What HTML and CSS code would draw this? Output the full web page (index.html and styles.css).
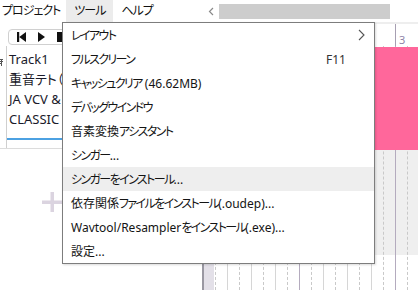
FILE: index.html
```html
<!DOCTYPE html>
<html lang="ja">
<head>
    <meta charset="UTF-8">
    <title>OpenUtau</title>
    <link rel="stylesheet" href="styles.css">
</head>
<body>
<div class="app">
    <!-- メニューバー -->
    <div class="menubar">
        <div class="menus">
            <span class="menu-item">プロジェクト</span>
            <span class="menu-item open">ツール</span>
            <span class="menu-item">ヘルプ</span>
        </div>
        <div class="hscroll">
            <svg class="scroll-arrow" width="6" height="9" viewBox="0 0 6 9"><polyline points="5,1 1.5,4.5 5,8" fill="none" stroke="#8a8a8a" stroke-width="1.2"/></svg>
            <div class="scroll-thumb"></div>
        </div>
    </div>

    <div class="workspace">
        <!-- トラックヘッダー -->
        <div class="side">
            <div class="toolbar">
                <div class="transport">
                    <svg width="9" height="10" viewBox="0 0 9 10"><rect x="0" y="0" width="2.2" height="10" fill="#111"/><polygon points="9,0 2.2,5 9,10" fill="#111"/></svg>
                    <svg width="7" height="10" viewBox="0 0 7 10"><polygon points="0,0 7,5 0,10" fill="#111"/></svg>
                    <svg width="9" height="10" viewBox="0 0 9 10"><rect x="0" y="0" width="9" height="10" fill="#111"/></svg>
                </div>
            </div>
            <div class="track-header">
                <div class="track-grip">
                    <svg width="3" height="7" viewBox="0 0 3 7"><path d="M0 0.5H3M0 2.5H3M0 4.5H2M1.5 0V7" stroke="#555" stroke-width="1" fill="none"/></svg>
                </div>
                <div class="track-info">
                    <div class="track-line">Track1</div>
                    <div class="track-line">重音テト（</div>
                    <div class="track-line">JA VCV &amp;</div>
                    <div class="track-line">CLASSIC</div>
                    <div class="track-meter"></div>
                </div>
            </div>
            <div class="add-track">
                <svg width="20" height="20" viewBox="0 0 20 20"><rect x="8.5" y="0" width="3.5" height="20" fill="#dbd4e0"/><rect x="0" y="8.5" width="20" height="3.5" fill="#dbd4e0"/></svg>
            </div>
        </div>

        <!-- トラックエリア -->
        <div class="arrange">
            <div class="ruler">
                <div class="bar-label">1</div>
                <div class="bar-label">2</div>
                <div class="bar-label">3</div>
            </div>
            <div class="arrange-body">
                <div class="rows">
                    <div class="row row-1"></div>
                    <div class="row row-2"></div>
                    <div class="row"></div>
                </div>
                <div class="beats">
                    <div class="beat first"></div>
                    <div class="beat"></div>
                    <div class="beat"></div>
                    <div class="beat"></div>
                    <div class="beat bar"></div>
                    <div class="beat"></div>
                    <div class="beat"></div>
                    <div class="beat"></div>
                    <div class="beat bar"></div>
                </div>
                <div class="parts">
                    <div class="part"></div>
                </div>
            </div>
        </div>
    </div>

    <!-- ツールメニュー -->
    <ul class="dropdown">
        <li>レイアウト<svg class="submenu" width="7" height="12" viewBox="0 0 7 12"><polyline points="1,1 6,6 1,11" fill="none" stroke="#555" stroke-width="1.1"/></svg></li>
        <li>フルスクリーン<span class="w shortcut">F11</span></li>
        <li>キャッシュクリア<span class="w">&nbsp;(46.62MB)</span></li>
        <li>デバッグウインドウ</li>
        <li><span class="w">音素変換</span>アシスタント</li>
        <li>シンガー<span class="w">...</span></li>
        <li class="hover">シンガーをインストール<span class="w">...</span></li>
        <li><span class="w">依存関係</span>ファイルをインストール<span class="w">(.oudep)...</span></li>
        <li><span class="w">Wavtool/Resampler</span>をインストール<span class="w">(.exe)...</span></li>
        <li><span class="w">設定...</span></li>
    </ul>
</div>
</body>
</html>
```

FILE: styles.css
```css
body {
    margin: 0;
    font-family: "Noto Sans", "Noto Sans CJK JP", sans-serif;
    font-size: 12px;
    color: #111;
    background-color: #fff;
    font-feature-settings: "palt";
}

.app {
    position: relative;
    width: 418px;
    height: 290px;
    overflow: hidden;
}

/* Menu bar */
.menubar {
    display: flex;
    height: 22px;
}

.menus {
    display: flex;
    width: 202px;
    letter-spacing: -1px;
}

.menu-item {
    height: 22px;
    line-height: 22px;
    padding: 0 8px;
}

.menu-item:first-child {
    padding: 0 6px 0 2px;
}

.menu-item.open {
    background-color: #ececec;
}

.hscroll {
    display: flex;
    align-items: center;
    padding-left: 6px;
}

.scroll-thumb {
    width: 171px;
    height: 15px;
    margin-left: 5px;
    background-color: #cdcdcd;
}

/* Workspace */
.workspace {
    display: flex;
    height: 268px;
}

.side {
    width: 202px;
    flex-shrink: 0;
}

.toolbar {
    height: 24px;
    padding: 7px 0 0 8px;
    box-sizing: border-box;
}

.transport {
    display: flex;
    align-items: center;
    gap: 12px;
    width: 90px;
    height: 16px;
    padding-left: 8px;
    border: 1px solid #d0d0d0;
    border-radius: 4px;
    box-sizing: border-box;
}

.track-header {
    display: flex;
    height: 103px;
    border-bottom: 1px solid #dcdcdc;
    box-sizing: border-box;
}

.track-grip {
    width: 6px;
    padding-top: 7px;
}

.track-info {
    flex: 1;
    border-left: 1px solid #cfcfcf;
    padding-top: 3px;
}

.track-line {
    padding-left: 2px;
    font-size: 13px;
    line-height: 20px;
    white-space: nowrap;
    color: #1a1a2a;
}

.track-meter {
    height: 2px;
    margin-top: 9px;
    background-color: #4ca1e2;
}

.add-track {
    display: flex;
    align-items: center;
    height: 106px;
    padding-left: 42px;
}

/* Arrange area */
.arrange {
    flex: 1;
    display: flex;
    flex-direction: column;
}

.ruler {
    display: flex;
    height: 24px;
    padding-left: 1px;
    border-top: 2px solid #eee;
    box-sizing: border-box;
}

.bar-label {
    flex: 0 0 96px;
    display: flex;
    align-items: flex-end;
    padding: 0 0 1px 3px;
    border-left: 1px solid #a79fb2;
    box-sizing: border-box;
    font-size: 11px;
    line-height: 1;
    color: #8f84a8;
}

.arrange-body {
    flex: 1;
    display: grid;
}

.rows,
.beats,
.parts {
    grid-area: 1 / 1;
}

.rows {
    display: flex;
    flex-direction: column;
}

.row {
    flex: 1;
}

.row-1 {
    flex: 0 0 104px;
}

.row-2 {
    flex: 0 0 105px;
    background-color: #efefef;
}

.beats {
    display: flex;
}

.beat {
    display: flex;
    flex: 0 0 24px;
    border-left: 1px solid #d6d6d6;
    box-sizing: border-box;
}

.beat::after {
    content: "";
    margin-left: 11px;
    border-left: 1px dashed #c9c9c9;
}

.beat.first {
    flex-basis: 25px;
    border-left: 2px solid #9a98a2;
    background: linear-gradient(to right, #e3e0e8 10px, transparent 10px);
}

.beat.bar {
    border-left-color: #b4abbe;
}

.parts {
    padding: 1px 0 0 12px;
}

.part {
    height: 103px;
    background-color: #ff679b;
}

/* Dropdown menu */
.dropdown {
    position: absolute;
    left: 62px;
    top: 22px;
    width: 311px;
    margin: 0;
    padding: 0;
    list-style: none;
    background-color: #fff;
    border: 1px solid #7d7d7d;
    box-shadow: 1px 1px 2px rgba(0, 0, 0, 0.15);
    letter-spacing: -1.6px;
}

.dropdown li {
    display: flex;
    align-items: center;
    height: 24px;
    padding: 0 9px 0 8px;
    white-space: pre;
    color: #141414;
}

.dropdown li .w {
    letter-spacing: 0;
}

.dropdown li.hover {
    background-color: #eeeeee;
}

.dropdown .shortcut {
    margin-left: auto;
    margin-right: 19px;
    color: #333;
}

.dropdown .submenu {
    margin-left: auto;
}
```
